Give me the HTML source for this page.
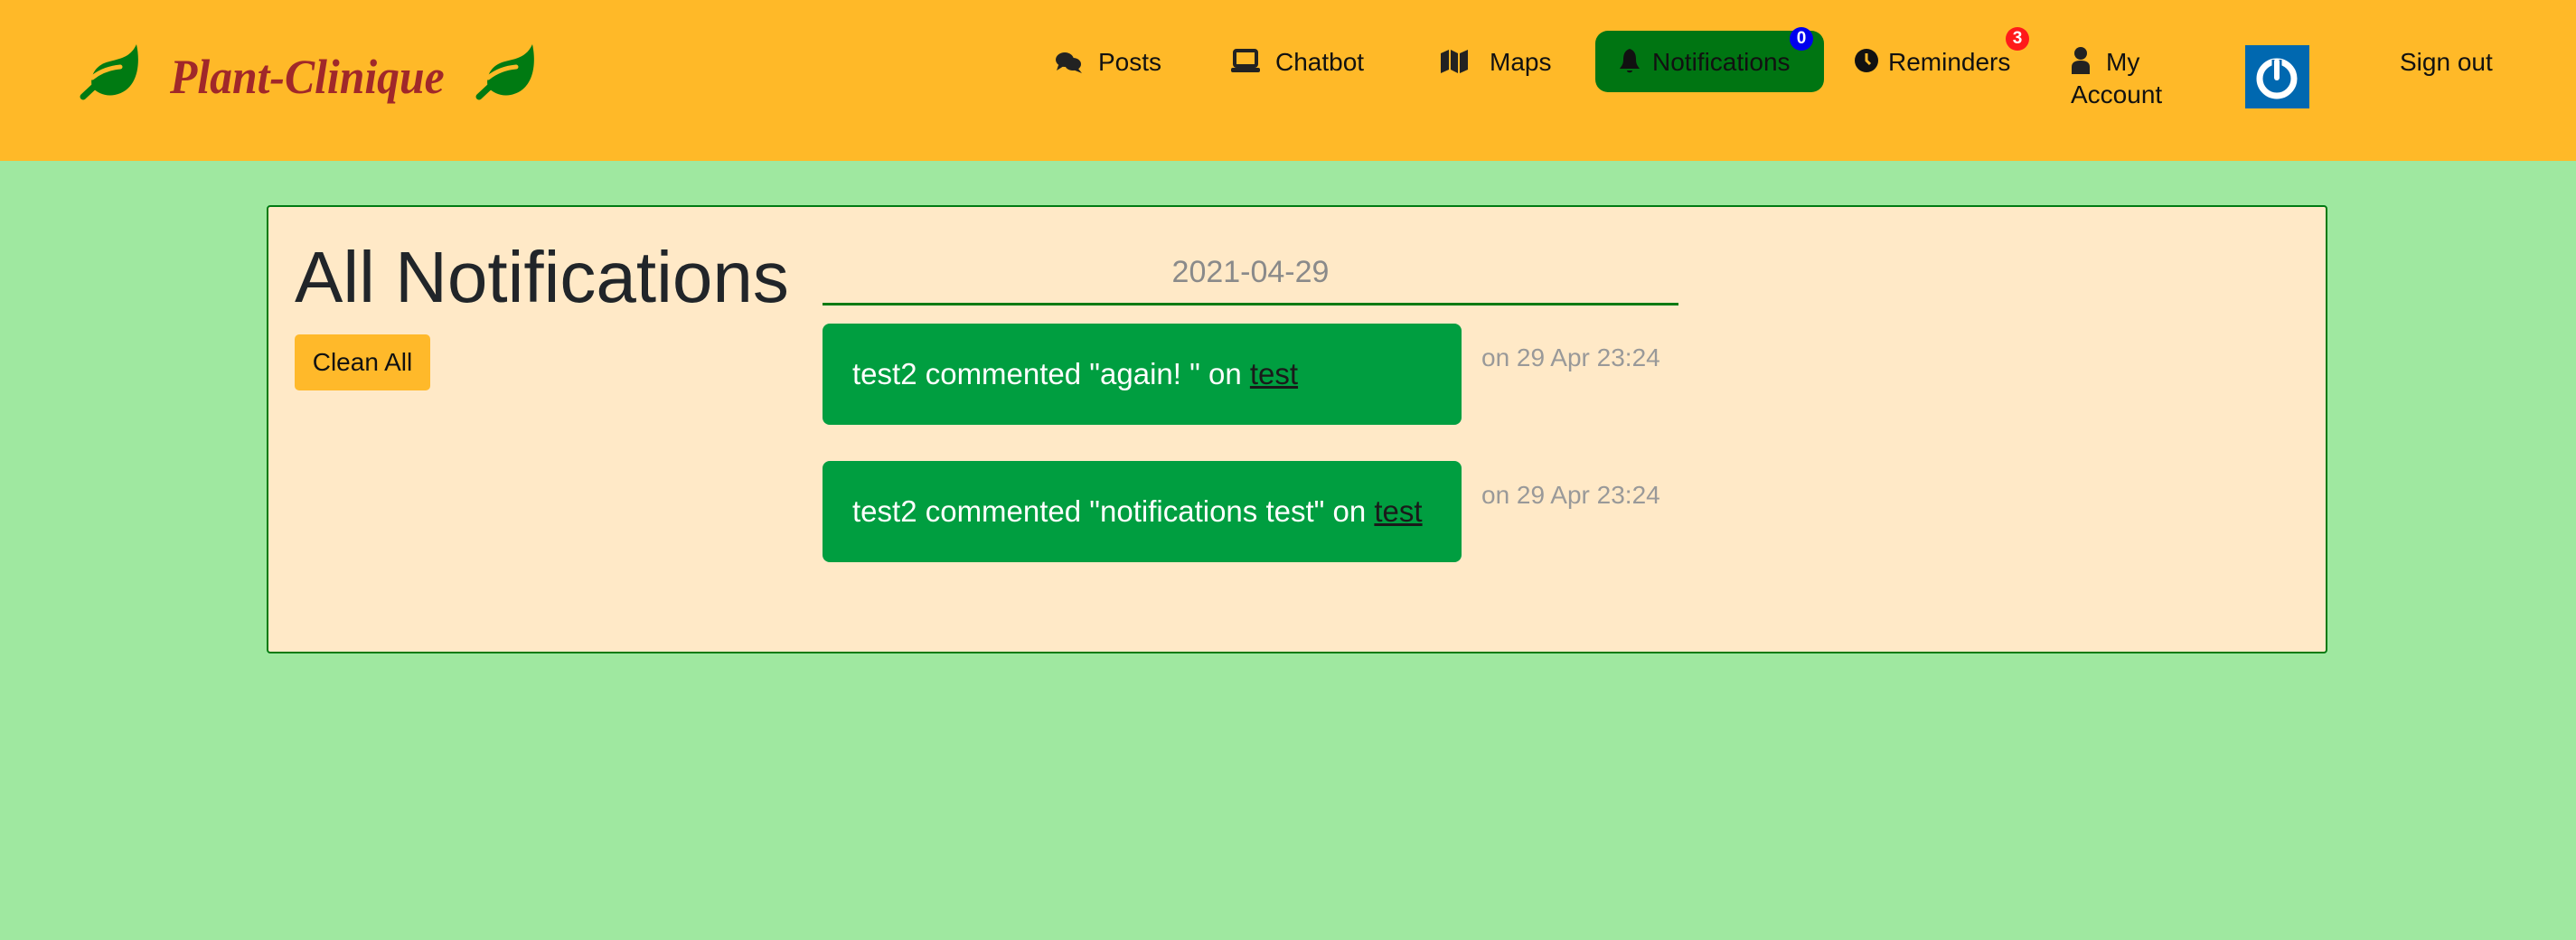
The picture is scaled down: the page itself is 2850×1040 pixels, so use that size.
<!DOCTYPE html>
<html><head><meta charset="utf-8"><style>
*{margin:0;padding:0;box-sizing:border-box}
body{width:2850px;height:1040px;background:#9fe8a0;font-family:"Liberation Sans",sans-serif;position:relative;overflow:hidden}
.hdr{position:absolute;left:0;top:0;width:2850px;height:178px;background:#ffb928}
.a{position:absolute}
.nav{position:absolute;font-size:28px;color:#111;top:52px;line-height:34px}
.logo{position:absolute;left:188px;top:54px;font-family:"Liberation Serif",serif;font-style:italic;font-weight:bold;font-size:54px;color:#a0282a;transform:scaleX(0.92);transform-origin:0 0;white-space:nowrap}
.panel{position:absolute;left:295px;top:227px;width:2280px;height:496px;background:#ffe9c7;border:2px solid #007a12;border-radius:4px}
.card{position:absolute;left:910px;width:707px;height:112px;background:#009e40;border-radius:8px;color:#fff;font-size:33px;padding-left:33px;line-height:112px}
.card u{color:#1a1a1a}
.tm{position:absolute;left:1639px;color:#999;font-size:28px}
.badge{position:absolute;width:26px;height:26px;border-radius:13px;color:#fff;font-size:19px;font-weight:bold;text-align:center;line-height:26px}
</style></head><body>
<div class="hdr">
<svg class="a" style="left:80px;top:40px" width="90" height="80" viewBox="0 0 90 80"><path fill="#007a12" d="M71 9C76 32 72 60 47 65C37 67 28 63 22 57C19 46 24 35 35 30C46 25 63 27 71 9Z"/><path d="M22 46C32 38 42 35 53 34" stroke="#ffb928" stroke-width="5" fill="none" stroke-linecap="round"/><path d="M27 53L12 67" stroke="#007a12" stroke-width="7" stroke-linecap="round"/></svg>
<div class="logo">Plant-Clinique</div>
<svg class="a" style="left:518px;top:40px" width="90" height="80" viewBox="0 0 90 80"><path fill="#007a12" d="M71 9C76 32 72 60 47 65C37 67 28 63 22 57C19 46 24 35 35 30C46 25 63 27 71 9Z"/><path d="M22 46C32 38 42 35 53 34" stroke="#ffb928" stroke-width="5" fill="none" stroke-linecap="round"/><path d="M27 53L12 67" stroke="#007a12" stroke-width="7" stroke-linecap="round"/></svg>

<svg class="a" style="left:1167px;top:56px" width="32" height="26" viewBox="0 0 32 26"><ellipse cx="11" cy="10" rx="10" ry="8" fill="#222"/><ellipse cx="20" cy="15" rx="9" ry="7" fill="#222"/><path d="M4 16L2 22L10 17Z M26 20L30 25L20 21Z" fill="#222"/></svg>
<div class="nav" style="left:1215px">Posts</div>
<svg class="a" style="left:1362px;top:54px" width="32" height="28" viewBox="0 0 32 28"><rect x="4" y="2" width="24" height="17" rx="2" fill="none" stroke="#222" stroke-width="4"/><rect x="0" y="21" width="32" height="5" rx="2" fill="#222"/></svg>
<div class="nav" style="left:1411px">Chatbot</div>
<svg class="a" style="left:1594px;top:55px" width="30" height="26" viewBox="0 0 30 26"><path d="M0 4L9 0V22L0 26Z M11 0L19 4V26L11 22Z M21 4L30 0V22L21 26Z" fill="#222"/></svg>
<div class="nav" style="left:1648px">Maps</div>
<div class="a" style="left:1765px;top:34px;width:253px;height:68px;background:#007512;border-radius:14px"></div>
<svg class="a" style="left:1792px;top:54px" width="22" height="28" viewBox="0 0 22 28"><path d="M11 0C5 2 4 7 4 12C4 18 1 20 0 22H22C21 20 18 18 18 12C18 7 17 2 11 0Z M8 24H14C14 27 8 27 8 24Z" fill="#111"/></svg>
<div class="nav" style="left:1828px">Notifications</div>
<div class="badge" style="left:1980px;top:30px;background:#0000ee">0</div>
<svg class="a" style="left:2052px;top:54px" width="26" height="26" viewBox="0 0 26 26"><circle cx="13" cy="13" r="13" fill="#111"/><path d="M13 5V13L17 17" stroke="#ffb928" stroke-width="3" fill="none"/></svg>
<div class="nav" style="left:2089px">Reminders</div>
<div class="badge" style="left:2219px;top:30px;background:#ff1a1a">3</div>
<svg class="a" style="left:2290px;top:52px" width="24" height="30" viewBox="0 0 24 30"><circle cx="12" cy="7" r="7" fill="#222"/><path d="M2 30V22C2 17 6 15 12 15C18 15 22 17 22 22V30Z" fill="#222"/></svg>
<div class="nav" style="left:2330px">My</div>
<div class="nav" style="left:2291px;top:88px">Account</div>
<div class="a" style="left:2484px;top:50px;width:71px;height:70px;background:#0068b0"></div>
<svg class="a" style="left:2494px;top:58px" width="50" height="54" viewBox="0 0 50 54"><circle cx="25" cy="29" r="19" fill="none" stroke="#fff" stroke-width="7"/><path d="M25 8V30" stroke="#0068b0" stroke-width="11"/><path d="M25 10V28" stroke="#fff" stroke-width="6" stroke-linecap="round"/></svg>
<div class="nav" style="left:2655px">Sign out</div>
</div>

<div class="panel"></div>
<div class="a" style="left:326px;top:262px;font-size:80px;color:#212529;line-height:90px">All Notifications</div>
<div class="a" style="left:326px;top:370px;width:150px;height:62px;background:#ffb92a;border-radius:5px;font-size:28px;line-height:62px;text-align:center;color:#111">Clean All</div>
<div class="a" style="left:910px;top:282px;width:947px;text-align:center;font-size:34px;color:#8a8a8a">2021-04-29</div>
<div class="a" style="left:910px;top:335px;width:947px;height:3px;background:#007a12"></div>
<div class="card" style="top:358px">test2 commented "again! " on <u>test</u></div>
<div class="tm" style="top:380px">on 29 Apr 23:24</div>
<div class="card" style="top:510px">test2 commented "notifications test" on <u>test</u></div>
<div class="tm" style="top:532px">on 29 Apr 23:24</div>
</body></html>
